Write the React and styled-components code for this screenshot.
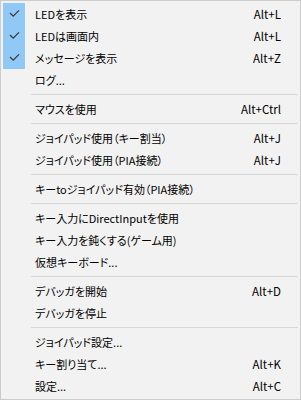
import React from "react";
import styled, { createGlobalStyle } from "styled-components";

const Global = createGlobalStyle`
  html, body { margin: 0; padding: 0; background: #ffffff; }
  body { font-family: "Noto Sans CJK JP", "Noto Sans", sans-serif; }
`;

const Menu = styled.div`
  box-sizing: border-box;
  width: 301px;
  height: 400px;
  background: #f2f2f2;
  border: 1px solid #cccccc;
  padding: 2px;
  display: flex;
  flex-direction: column;
  font-family: "Noto Sans CJK JP", sans-serif;
  font-size: 11px;
  font-feature-settings: "palt";
  color: #000000;
`;

const Row = styled.div`
  display: grid;
  grid-template-columns: 22px 1fr auto;
  align-items: center;
  height: 22px;
  padding-right: 17px;
`;

const CheckCell = styled.div`
  width: 22px;
  height: 22px;
  background: ${(p) => (p.$checked ? "#90c8f6" : "transparent")};
  display: flex;
  align-items: center;
  justify-content: center;
`;

const Label = styled.span`
  padding-left: 10px;
  line-height: 22px;
  white-space: nowrap;
`;

const Shortcut = styled.span`
  line-height: 22px;
  text-align: right;
  white-space: nowrap;
  font-size: 11.5px;
`;

const Separator = styled.div`
  height: 7px;
  display: flex;
  align-items: center;
  padding-left: 28px;
  &::after {
    content: "";
    flex: 1;
    height: 1px;
    background: #d7d7d7;
  }
`;

const Check = () => (
  <svg width="22" height="22" viewBox="0 0 22 22">
    <polyline
      points="7,10 10.2,13.2 16,7.4"
      fill="none"
      stroke="#3a3a3a"
      strokeWidth="1.3"
    />
  </svg>
);

const items = [
  { label: "LEDを表示", key: "Alt+L", checked: true },
  { label: "LEDは画面内", key: "Alt+L", checked: true },
  { label: "メッセージを表示", key: "Alt+Z", checked: true },
  { label: "ログ..." },
  "sep",
  { label: "マウスを使用", key: "Alt+Ctrl" },
  "sep",
  { label: "ジョイパッド使用（キー割当）", key: "Alt+J" },
  { label: "ジョイパッド使用（PIA接続）", key: "Alt+J" },
  "sep",
  { label: "キーtoジョイパッド有効（PIA接続）" },
  "sep",
  { label: "キー入力にDirectInputを使用" },
  { label: "キー入力を鈍くする(ゲーム用)" },
  { label: "仮想キーボード..." },
  "sep",
  { label: "デバッガを開始", key: "Alt+D" },
  { label: "デバッガを停止" },
  "sep",
  { label: "ジョイパッド設定..." },
  { label: "キー割り当て...", key: "Alt+K" },
  { label: "設定...", key: "Alt+C" },
];

export default function App() {
  return (
    <>
      <Global />
      <Menu>
        {items.map((it, i) =>
          it === "sep" ? (
            <Separator key={i} />
          ) : (
            <Row key={i}>
              <CheckCell $checked={it.checked}>{it.checked && <Check />}</CheckCell>
              <Label>{it.label}</Label>
              <Shortcut>{it.key || ""}</Shortcut>
            </Row>
          )
        )}
      </Menu>
    </>
  );
}
